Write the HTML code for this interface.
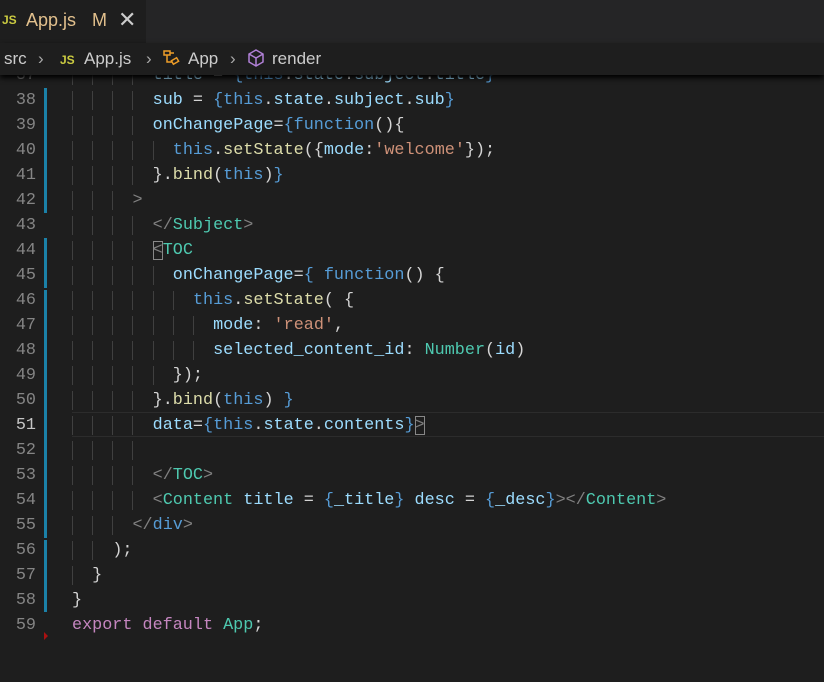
<!DOCTYPE html>
<html><head><meta charset="utf-8"><style>
body{margin:0;width:824px;height:682px;background:#1e1e1e;overflow:hidden;font-family:"Liberation Sans",sans-serif;position:relative}
.tabs{position:absolute;left:0;top:0;width:824px;height:43px;background:#252526}
.tab{position:absolute;left:0;top:0;width:146px;height:43px;background:#1e1e1e;color:#e2c08d;font-size:18px}
.bc{position:absolute;left:0;top:43px;width:824px;height:32px;background:#1e1e1e;color:#cccccc;font-size:17px;z-index:3;box-shadow:0 3px 5px #000}
.js{color:#cbcb41;font-weight:bold;font-size:12px}
.code{position:absolute;left:0;top:63px;font-family:"Liberation Mono",monospace;font-size:16.8px;color:#d4d4d4}
.l{position:absolute;left:0;height:25px;line-height:25px;white-space:pre;width:824px}
.n{position:absolute;left:0;width:36px;text-align:right;color:#858585}
.t{position:absolute;left:72px}
.g{box-shadow:inset 1px 0 #404040}
.v{color:#9cdcfe}.k{color:#569cd6}.f{color:#dcdcaa}.s{color:#ce9178}.c{color:#4ec9b0}.p{color:#808080}.m{color:#c586c0}
.bar{position:absolute;left:44px;width:3px;background:#1b81a8}
</style></head><body>
<div class="tabs"><div class="tab"><span class="js" style="position:absolute;left:2px;top:13px">JS</span><span style="position:absolute;left:26px;top:10px">App.js</span><span style="position:absolute;left:92px;top:10px">M</span><span style="position:absolute;left:118px;top:7px;color:#ccc;font-size:22px">✕</span></div></div>
<div class="bc"><span style="position:absolute;left:4px;top:6px">src</span><span style="position:absolute;left:38px;top:6px;color:#aaa">›</span><span class="js" style="position:absolute;left:60px;top:10px">JS</span><span style="position:absolute;left:84px;top:6px">App.js</span><span style="position:absolute;left:146px;top:6px;color:#aaa">›</span>
<svg style="position:absolute;left:162px;top:6px" width="20" height="20" viewBox="0 0 20 20" fill="none" stroke="#ee9d28" stroke-width="1.5"><rect x="2" y="2" width="6" height="4"/><rect x="10" y="10" width="6" height="4" transform="rotate(-30 13 12)"/><path d="M5 6v7h5M8 4h4"/></svg>
<span style="position:absolute;left:188px;top:6px">App</span><span style="position:absolute;left:230px;top:6px;color:#aaa">›</span>
<svg style="position:absolute;left:246px;top:5px" width="20" height="20" viewBox="0 0 20 20" fill="none" stroke="#b180d7" stroke-width="1.5"><path d="M10 2l7 4v8l-7 4-7-4V6z M3 6l7 4 7-4 M10 10v8"/></svg>
<span style="position:absolute;left:272px;top:6px">render</span></div>
<div class="bar" style="top:88px;height:125px"></div>
<div class="bar" style="top:238px;height:50px"></div>
<div class="bar" style="top:290px;height:248px"></div>
<div class="bar" style="top:540px;height:72px"></div>
<div style="position:absolute;left:0;top:412px;width:824px;height:25px;box-shadow:inset 0 1px #2c2c2c,inset 0 -1px #2c2c2c;left:72px"></div>
<div style="position:absolute;left:44px;top:632px;width:0;height:0;border-left:4px solid #a11;border-top:4px solid transparent;border-bottom:4px solid transparent"></div>
<div class="code">
<div class="l" style="top:0"><span class="n">37</span><span class="t"><span class="g">  </span><span class="g">  </span><span class="g">  </span><span class="g">  </span><span class="v">title</span> = <span class="k">{this</span>.<span class="v">state</span>.<span class="v">subject</span>.<span class="v">title</span><span class="k">}</span></span></div>
<div class="l" style="top:25px"><span class="n">38</span><span class="t"><span class="g">  </span><span class="g">  </span><span class="g">  </span><span class="g">  </span><span class="v">sub</span> = <span class="k">{this</span>.<span class="v">state</span>.<span class="v">subject</span>.<span class="v">sub</span><span class="k">}</span></span></div>
<div class="l" style="top:50px"><span class="n">39</span><span class="t"><span class="g">  </span><span class="g">  </span><span class="g">  </span><span class="g">  </span><span class="v">onChangePage</span>=<span class="k">{function</span>(){</span></div>
<div class="l" style="top:75px"><span class="n">40</span><span class="t"><span class="g">  </span><span class="g">  </span><span class="g">  </span><span class="g">  </span><span class="g">  </span><span class="k">this</span>.<span class="f">setState</span>({<span class="v">mode</span>:<span class="s">'welcome'</span>});</span></div>
<div class="l" style="top:100px"><span class="n">41</span><span class="t"><span class="g">  </span><span class="g">  </span><span class="g">  </span><span class="g">  </span>}.<span class="f">bind</span>(<span class="k">this</span>)<span class="k">}</span></span></div>
<div class="l" style="top:125px"><span class="n">42</span><span class="t"><span class="g">  </span><span class="g">  </span><span class="g">  </span><span class="p">&gt;</span></span></div>
<div class="l" style="top:150px"><span class="n">43</span><span class="t"><span class="g">  </span><span class="g">  </span><span class="g">  </span><span class="g">  </span><span class="p">&lt;/</span><span class="c">Subject</span><span class="p">&gt;</span></span></div>
<div class="l" style="top:175px"><span class="n">44</span><span class="t"><span class="g">  </span><span class="g">  </span><span class="g">  </span><span class="g">  </span><span class="p" style="outline:1px solid #888;outline-offset:-1px">&lt;</span><span class="c">TOC</span></span></div>
<div class="l" style="top:200px"><span class="n">45</span><span class="t"><span class="g">  </span><span class="g">  </span><span class="g">  </span><span class="g">  </span><span class="g">  </span><span class="v">onChangePage</span>=<span class="k">{ function</span>() {</span></div>
<div class="l" style="top:225px"><span class="n">46</span><span class="t"><span class="g">  </span><span class="g">  </span><span class="g">  </span><span class="g">  </span><span class="g">  </span><span class="g">  </span><span class="k">this</span>.<span class="f">setState</span>( {</span></div>
<div class="l" style="top:250px"><span class="n">47</span><span class="t"><span class="g">  </span><span class="g">  </span><span class="g">  </span><span class="g">  </span><span class="g">  </span><span class="g">  </span><span class="g">  </span><span class="v">mode</span>: <span class="s">'read'</span>,</span></div>
<div class="l" style="top:275px"><span class="n">48</span><span class="t"><span class="g">  </span><span class="g">  </span><span class="g">  </span><span class="g">  </span><span class="g">  </span><span class="g">  </span><span class="g">  </span><span class="v">selected_content_id</span>: <span class="c">Number</span>(<span class="v">id</span>)</span></div>
<div class="l" style="top:300px"><span class="n">49</span><span class="t"><span class="g">  </span><span class="g">  </span><span class="g">  </span><span class="g">  </span><span class="g">  </span>});</span></div>
<div class="l" style="top:325px"><span class="n">50</span><span class="t"><span class="g">  </span><span class="g">  </span><span class="g">  </span><span class="g">  </span>}.<span class="f">bind</span>(<span class="k">this</span>) <span class="k">}</span></span></div>
<div class="l" style="top:350px"><span class="n" style="color:#c6c6c6">51</span><span class="t"><span class="g">  </span><span class="g">  </span><span class="g">  </span><span class="g">  </span><span class="v">data</span>=<span class="k">{this</span>.<span class="v">state</span>.<span class="v">contents</span><span class="k">}</span><span class="p" style="outline:1px solid #888;outline-offset:-1px">&gt;</span></span></div>
<div class="l" style="top:375px"><span class="n">52</span><span class="t"><span class="g">  </span><span class="g">  </span><span class="g">  </span><span class="g">  </span></span></div>
<div class="l" style="top:400px"><span class="n">53</span><span class="t"><span class="g">  </span><span class="g">  </span><span class="g">  </span><span class="g">  </span><span class="p">&lt;/</span><span class="c">TOC</span><span class="p">&gt;</span></span></div>
<div class="l" style="top:425px"><span class="n">54</span><span class="t"><span class="g">  </span><span class="g">  </span><span class="g">  </span><span class="g">  </span><span class="p">&lt;</span><span class="c">Content</span> <span class="v">title</span> = <span class="k">{</span><span class="v">_title</span><span class="k">}</span> <span class="v">desc</span> = <span class="k">{</span><span class="v">_desc</span><span class="k">}</span><span class="p">&gt;&lt;/</span><span class="c">Content</span><span class="p">&gt;</span></span></div>
<div class="l" style="top:450px"><span class="n">55</span><span class="t"><span class="g">  </span><span class="g">  </span><span class="g">  </span><span class="p">&lt;/</span><span class="k">div</span><span class="p">&gt;</span></span></div>
<div class="l" style="top:475px"><span class="n">56</span><span class="t"><span class="g">  </span><span class="g">  </span>);</span></div>
<div class="l" style="top:500px"><span class="n">57</span><span class="t"><span class="g">  </span>}</span></div>
<div class="l" style="top:525px"><span class="n">58</span><span class="t">}</span></div>
<div class="l" style="top:550px"><span class="n">59</span><span class="t"><span class="m">export</span> <span class="m">default</span> <span class="c">App</span>;</span></div>
</div>
</body></html>
